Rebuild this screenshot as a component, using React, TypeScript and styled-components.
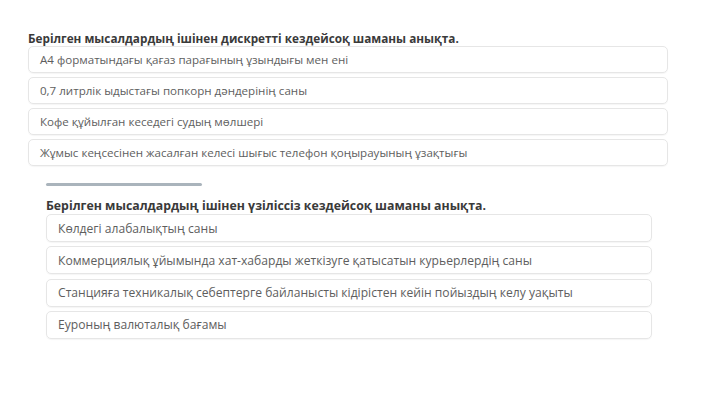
import React from "react";
import styled, { createGlobalStyle } from "styled-components";

const Global = createGlobalStyle`
  html, body { margin: 0; padding: 0; background: #ffffff; }
  body { font-family: "Open Sans", "Noto Sans", sans-serif; }
`;

const Page = styled.div`
  width: 720px;
  height: 405px;
  overflow: hidden;
  display: flex;
  flex-direction: column;
  padding-top: 30px;
  box-sizing: border-box;
`;

const Section = styled.section<{ $left: number; $width: number; $top?: number; $size: number }>`
  margin-left: ${(p) => p.$left}px;
  width: ${(p) => p.$width}px;
  margin-top: ${(p) => p.$top ?? 0}px;
  display: flex;
  flex-direction: column;
  font-size: ${(p) => p.$size}px;
`;

const Divider = styled.div`
  width: 156px;
  height: 3px;
  border-radius: 2px;
  background: #aab4bc;
  margin-bottom: 12px;
`;

const Title = styled.h3`
  margin: 0;
  font-size: 1em;
  line-height: 16px;
  font-weight: 700;
  color: #3a3a3a;
`;

const List = styled.div<{ $gap: number }>`
  display: flex;
  flex-direction: column;
  gap: ${(p) => p.$gap}px;
`;

const Row = styled.div<{ $h: number }>`
  height: ${(p) => p.$h}px;
  box-sizing: border-box;
  border: 1px solid #e6e6e6;
  border-radius: 5px;
  box-shadow: 0 1px 1px rgba(0, 0, 0, 0.04);
  padding: 0 11px;
  display: flex;
  align-items: center;
  font-size: 0.985em;
  color: #5e5e5e;
  white-space: nowrap;
`;

const first = [
  "А4 форматындағы қағаз парағының ұзындығы мен ені",
  "0,7 литрлік ыдыстағы попкорн дәндерінің саны",
  "Кофе құйылған кеседегі судың мөлшері",
  "Жұмыс кеңсесінен жасалған келесі шығыс телефон қоңырауының ұзақтығы",
];

const second = [
  "Көлдегі алабалықтың саны",
  "Коммерциялық ұйымында хат-хабарды жеткізуге қатысатын курьерлердің саны",
  "Станцияға техникалық себептерге байланысты кідірістен кейін пойыздың келу уақыты",
  "Еуроның валюталық бағамы",
];

export default function App() {
  return (
    <Page>
      <Global />
      <Section $left={28} $width={640} $size={11.75}>
        <Title>Берілген мысалдардың ішінен дискретті кездейсоқ шаманы анықта.</Title>
        <List $gap={4}>
          {first.map((t) => (
            <Row $h={27} key={t}>{t}</Row>
          ))}
        </List>
      </Section>
      <Section $left={46} $width={606} $top={17} $size={12.3}>
        <Divider />
        <Title>Берілген мысалдардың ішінен үзіліссіз кездейсоқ шаманы анықта.</Title>
        <List $gap={4.3}>
          {second.map((t) => (
            <Row $h={28} key={t}>{t}</Row>
          ))}
        </List>
      </Section>
    </Page>
  );
}
